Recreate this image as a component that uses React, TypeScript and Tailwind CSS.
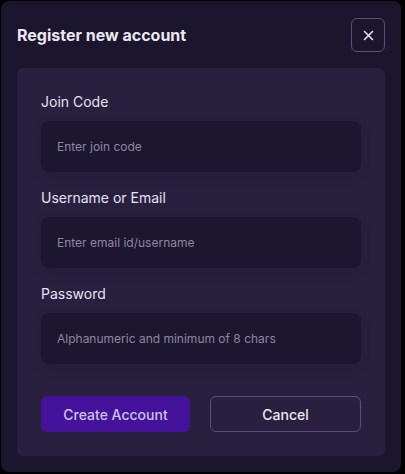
import React from 'react';

const fields = [
  { label: 'Join Code', placeholder: 'Enter join code', type: 'text' },
  { label: 'Username or Email', placeholder: 'Enter email id/username', type: 'text' },
  { label: 'Password', placeholder: 'Alphanumeric and minimum of 8 chars', type: 'password' },
];

export default function App() {
  return (
    <div className="w-[405px] h-[474px] bg-black p-px font-['Inter',sans-serif]">
      <div className="w-[400px] h-[471px] rounded-lg bg-[#1c152e] px-4 pt-[17px] flex flex-col">
        <header className="flex items-center justify-between">
          <h1 className="text-[16px] font-bold text-[#ebe8f1]">Register new account</h1>
          <button className="w-[34px] h-[34px] rounded-md border border-[#5c4c88] flex items-center justify-center text-[#e6e2ee]">
            <svg width="11" height="11" viewBox="0 0 11 11" fill="none" stroke="currentColor" strokeWidth="1.6" strokeLinecap="round">
              <path d="M1.5 1.5l8 8M9.5 1.5l-8 8" />
            </svg>
          </button>
        </header>

        <form className="mt-4 rounded-md bg-[#292040] px-6 pt-6 pb-6 flex flex-col" onSubmit={(e) => e.preventDefault()}>
          {fields.map((f) => (
            <div key={f.label} className="flex flex-col mb-4">
              <label className="text-[14px] leading-5 text-[#e6e2ee] mb-[9px]">{f.label}</label>
              <input
                type={f.type}
                placeholder={f.placeholder}
                className="h-[51px] rounded-lg bg-[#1d1630] px-4 text-[12px] text-[#e6e2ee] placeholder:text-[#8d86a0] outline-none shadow-[0_4px_12px_rgba(0,0,0,0.12)]"
              />
            </div>
          ))}

          <div className="flex gap-5 mt-4">
            <button className="flex-1 h-9 rounded-md bg-[#45139b] text-[14px] font-medium text-[#cdc4e4]">Create Account</button>
            <button type="button" className="flex-1 h-9 rounded-md border border-[#5c4c88] text-[14px] font-medium text-[#ebe8f1]">Cancel</button>
          </div>
        </form>
      </div>
    </div>
  );
}
